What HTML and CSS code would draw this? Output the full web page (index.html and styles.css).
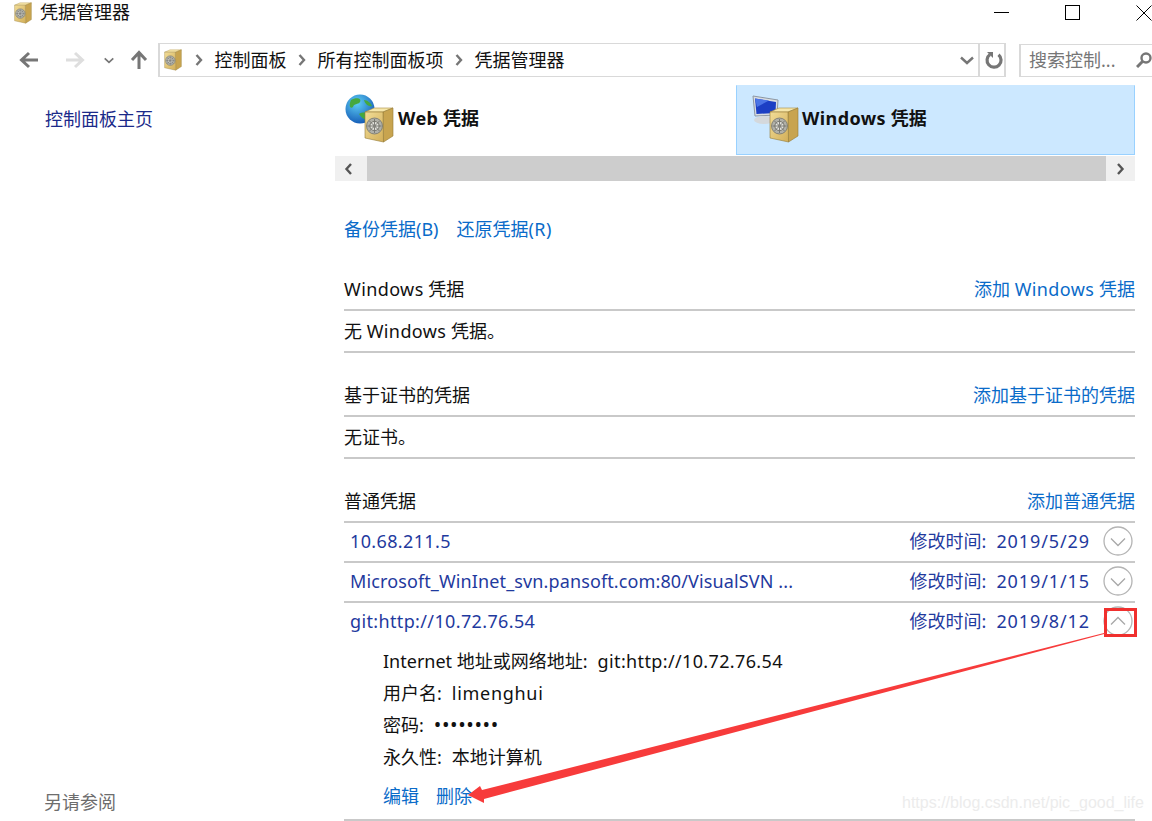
FILE: index.html
```html
<!DOCTYPE html>
<html lang="zh-CN">
<head>
    <meta charset="UTF-8">
    <title>凭据管理器</title>
    <link rel="stylesheet" href="styles.css">
</head>
<body>
    <svg class="defs" width="0" height="0">
        <defs>
            <linearGradient id="safeFront" x1="0" y1="0" x2="1" y2="1">
                <stop offset="0" stop-color="#f2dd97"/>
                <stop offset="1" stop-color="#d2ae58"/>
            </linearGradient>
            <radialGradient id="globeFill" cx="0.4" cy="0.3" r="0.8">
                <stop offset="0" stop-color="#5fd0f5"/>
                <stop offset="1" stop-color="#0d4fb0"/>
            </radialGradient>
            <symbol id="safe" viewBox="0 0 30 36">
                <path d="M1 5 L10 1 L29 1 L19 5 Z" fill="#f6e7ab" stroke="#a98a3c" stroke-width="0.6"/>
                <path d="M19 5 L29 1 L29 29 L19.5 35 Z" fill="#c8a44f" stroke="#947a36" stroke-width="0.6"/>
                <path d="M1 5 L19 5 L19.5 35 L1 31 Z" fill="url(#safeFront)" stroke="#947a36" stroke-width="0.6"/>
                <circle cx="10.5" cy="19" r="8" fill="#b0b0a8" stroke="#74746c" stroke-width="0.8"/>
                <circle cx="10.5" cy="19" r="4.6" fill="#e2e2dc" stroke="#77776f"/>
                <path d="M10.5 12 V26 M3.5 19 H17.5 M5.5 14 L15.5 24 M15.5 14 L5.5 24" stroke="#74746e" stroke-width="0.9"/>
                <circle cx="10.5" cy="19" r="1.7" fill="#85857f"/>
            </symbol>
            <symbol id="chevronRight" viewBox="0 0 8 12">
                <path d="M1.5 1 L6 6 L1.5 11" fill="none" stroke="currentColor" stroke-width="2.4"/>
            </symbol>
            <symbol id="chevronDown" viewBox="0 0 14 9">
                <path d="M1 1.5 L7 7 L13 1.5" fill="none" stroke="currentColor" stroke-width="2.4"/>
            </symbol>
            <symbol id="circleDown" viewBox="0 0 30 30">
                <circle cx="15" cy="15" r="14" fill="none" stroke="#b4b4b4" stroke-width="1.3"/>
                <path d="M8 12.5 L15 19.5 L22 12.5" fill="none" stroke="#a8a8a8" stroke-width="1.3"/>
            </symbol>
            <symbol id="circleUp" viewBox="0 0 30 30">
                <circle cx="15" cy="15" r="14" fill="none" stroke="#b4b4b4" stroke-width="1.3"/>
                <path d="M8 18.5 L15 11.5 L22 18.5" fill="none" stroke="#a8a8a8" stroke-width="1.3"/>
            </symbol>
        </defs>
    </svg>

    <header class="titlebar">
        <svg class="title-icon"><use href="#safe"/></svg>
        <span class="title-text">凭据管理器</span>
        <div class="window-btns">
            <svg class="win-btn" viewBox="0 0 16 16"><path d="M0 7.5 H15" stroke="#000" fill="none"/></svg>
            <svg class="win-btn" viewBox="0 0 16 16"><rect x="0.5" y="0.5" width="14" height="14" stroke="#000" fill="none"/></svg>
            <svg class="win-btn" viewBox="0 0 16 16"><path d="M0.5 0.5 L15.5 15.5 M15.5 0.5 L0.5 15.5" stroke="#000" fill="none"/></svg>
        </div>
    </header>

    <nav class="navbar">
        <div class="nav-arrows">
            <svg class="nav-arrow" viewBox="0 0 20 18"><path d="M19 9 H3 M10 2 L2.5 9 L10 16" fill="none" stroke="#767676" stroke-width="3"/></svg>
            <svg class="nav-arrow" viewBox="0 0 20 18"><path d="M1 9 H17 M10 2 L17.5 9 L10 16" fill="none" stroke="#dedede" stroke-width="3"/></svg>
            <svg class="nav-drop"><use href="#chevronDown"/></svg>
            <svg class="nav-up" viewBox="0 0 18 20"><path d="M9 19 V3 M2 10 L9 2.5 L16 10" fill="none" stroke="#767676" stroke-width="3"/></svg>
        </div>
        <div class="address">
            <svg class="address-icon"><use href="#safe"/></svg>
            <svg class="crumb-sep"><use href="#chevronRight"/></svg>
            <span>控制面板</span>
            <svg class="crumb-sep"><use href="#chevronRight"/></svg>
            <span>所有控制面板项</span>
            <svg class="crumb-sep"><use href="#chevronRight"/></svg>
            <span>凭据管理器</span>
            <svg class="address-drop"><use href="#chevronDown"/></svg>
            <div class="refresh">
                <svg viewBox="0 0 18 18" width="18" height="18"><path d="M13.5 3.8 A7 7 0 1 1 5 3.5" fill="none" stroke="#767676" stroke-width="3.2"/><path d="M3 0 H9 V6 Z" fill="#767676" transform="translate(-1 1)"/></svg>
            </div>
        </div>
        <div class="search">
            <span>搜索控制...</span>
            <svg class="search-icon" viewBox="0 0 16 16"><circle cx="10" cy="6" r="4.5" fill="none" stroke="#767676" stroke-width="2.4"/><path d="M6.5 9.5 L1 15" stroke="#767676" stroke-width="3"/></svg>
        </div>
    </nav>

    <div class="page">
        <aside class="sidebar">
            <a class="side-link">控制面板主页</a>
            <span class="side-note">另请参阅</span>
        </aside>

        <main class="content">
            <div class="tabs">
                <div class="tab">
                    <svg class="tab-globe" viewBox="0 0 30 30">
                        <circle cx="15" cy="15" r="14.5" fill="url(#globeFill)"/>
                        <path d="M6 6 C11 3 17 4 15 8 C13 11 9 9 8 13 C6 15 3 13 6 6 Z M14 20 C18 17 25 19 27 21 C24 27 18 27 14 20 Z M19 6 C22 6 26 9 27 12 C24 13 20 10 19 6 Z" fill="#46a83e"/>
                    </svg>
                    <svg class="tab-safe"><use href="#safe"/></svg>
                    <span class="tab-label"><span class="latin">Web</span> 凭据</span>
                </div>
                <div class="tab active">
                    <svg class="tab-screen" viewBox="0 0 30 30">
                        <path d="M2 1 L27 5 L26 20 L4 21 Z" fill="#d9dde2" stroke="#8d97a3"/>
                        <path d="M4 3.5 L25 7 L24.5 18 L5.5 19 Z" fill="#1c3fc4"/>
                        <path d="M4 3.5 L18 5.5 L6 12 Z" fill="#4a74e6"/>
                        <ellipse cx="13" cy="25" rx="10" ry="4" fill="#d4d8dc"/>
                    </svg>
                    <svg class="tab-safe"><use href="#safe"/></svg>
                    <span class="tab-label"><span class="latin">Windows</span> 凭据</span>
                </div>
            </div>
            <div class="scrollbar">
                <div class="scroll-btn"><svg class="scroll-left"><use href="#chevronRight"/></svg></div>
                <div class="scroll-thumb"></div>
                <div class="scroll-btn narrow"><svg class="scroll-right"><use href="#chevronRight"/></svg></div>
            </div>

            <div class="inner">
                <div class="backup-links">
                    <a class="action">备份凭据(B)</a>
                    <a class="action">还原凭据<span class="latin">(R)</span></a>
                </div>

                <section class="cred-section first">
                    <div class="section-head"><span><span class="latin">Windows</span> 凭据</span><a class="action">添加 <span class="latin">Windows</span> 凭据</a></div>
                    <div class="empty-row"><span>无 <span class="latin">Windows</span> 凭据。</span></div>
                </section>

                <section class="cred-section">
                    <div class="section-head"><span>基于证书的凭据</span><a class="action">添加基于证书的凭据</a></div>
                    <div class="empty-row">无证书。</div>
                </section>

                <section class="cred-section">
                    <div class="section-head"><span>普通凭据</span><a class="action">添加普通凭据</a></div>
                    <div class="cred-row ruled">
                        <a class="cred-name numeric">10.68.211.5</a>
                        <span class="cred-date"><span>修改时间:</span><span class="date-value">2019/5/29</span></span>
                        <svg class="cred-toggle"><use href="#circleDown"/></svg>
                    </div>
                    <div class="cred-row ruled">
                        <a class="cred-name">Microsoft_WinInet_svn.pansoft.com:80/VisualSVN ...</a>
                        <span class="cred-date"><span>修改时间:</span><span class="date-value">2019/1/15</span></span>
                        <svg class="cred-toggle"><use href="#circleDown"/></svg>
                    </div>
                    <div class="cred-row open">
                        <a class="cred-name numeric">git:http://10.72.76.54</a>
                        <span class="cred-date"><span>修改时间:</span><span class="date-value">2019/8/12</span></span>
                        <svg class="cred-toggle"><use href="#circleUp"/></svg>
                    </div>
                    <div class="cred-detail">
                        <div class="detail-line"><span>Internet 地址或网络地址:</span><span class="numeric">git:http://10.72.76.54</span></div>
                        <div class="detail-line"><span>用户名:</span><span class="wide">limenghui</span></div>
                        <div class="detail-line"><span>密码:</span><span class="dots">••••••••</span></div>
                        <div class="detail-line"><span>永久性:</span><span>本地计算机</span></div>
                        <div class="detail-actions"><a class="action">编辑</a><a class="action">删除</a></div>
                    </div>
                </section>
            </div>
        </main>
    </div>

    <!-- annotation drawn on top of the screenshot -->
    <div class="red-box"></div>
    <svg class="red-arrow" viewBox="0 0 1152 821" width="1152" height="821">
        <path d="M1106 632.5 L482 790 L480 786 L468 795 L484 803 L484 799 L1106 633.5 Z" fill="#f73b3b"/>
    </svg>
    <span class="watermark">https://blog.csdn.net/pic_good_life</span>
</body>
</html>
```

FILE: styles.css
```css
* {
    margin: 0;
    padding: 0;
    box-sizing: border-box;
}

html, body {
    height: 821px;
    overflow: hidden;
}

body {
    font-family: 'Noto Sans', 'Noto Sans CJK SC', sans-serif;
    font-size: 18px;
    line-height: 24px;
    color: #111;
    background: #fff;
    position: relative;
}

.defs {
    display: block;
    height: 0;
}

.latin {
    letter-spacing: 0.4px;
}

.numeric {
    letter-spacing: 0.36px;
}

.wide {
    letter-spacing: 0.7px;
}

/* title bar */
.titlebar {
    height: 43px;
    display: flex;
    align-items: flex-start;
    padding-left: 14px;
}

.title-icon {
    width: 18px;
    height: 22px;
    margin-top: 2px;
}

.title-text {
    margin-left: 8px;
    line-height: 24px;
}

.window-btns {
    margin-left: auto;
    display: flex;
    gap: 55px;
    padding-top: 5px;
}

.win-btn {
    width: 16px;
    height: 16px;
}

/* nav bar */
.navbar {
    height: 34px;
    display: flex;
    align-items: center;
}

.nav-arrows {
    width: 158px;
    display: flex;
    align-items: center;
    padding-left: 19px;
}

.nav-arrow {
    width: 20px;
    height: 18px;
    margin-right: 26px;
}

.nav-arrow + .nav-arrow {
    margin-right: 19px;
}

.nav-drop {
    width: 10px;
    height: 7px;
    color: #767676;
    margin-right: 20px;
}

.nav-up {
    width: 18px;
    height: 20px;
    margin-left: -4px;
}

.address {
    width: 848px;
    height: 34px;
    border: 2px solid #d9d9d9;
    border-width: 1px 2px;
    display: flex;
    align-items: center;
    padding-left: 4px;
}

.address-icon {
    width: 18px;
    height: 22px;
}

.crumb-sep {
    width: 8px;
    height: 12px;
    color: #767676;
    margin: 0 11.5px;
}

.address-icon + .crumb-sep {
    margin-left: 13px;
}

.address-drop {
    width: 14px;
    height: 9px;
    color: #767676;
    margin-left: auto;
    margin-right: 4px;
}

.refresh {
    width: 26px;
    height: 32px;
    border-left: 2px solid #d9d9d9;
    display: flex;
    align-items: center;
    justify-content: center;
    padding-left: 3px;
}

.search {
    margin-left: 13px;
    flex: 1;
    height: 33px;
    border: 2px solid #d9d9d9;
    border-width: 1px 0 1px 2px;
    display: flex;
    align-items: center;
    padding-left: 8px;
    color: #767676;
    white-space: nowrap;
}

.search-icon {
    width: 16px;
    height: 16px;
    margin-left: auto;
    flex-shrink: 0;
}

/* page body */
.page {
    display: flex;
    margin-top: 8px;
    height: 736px;
}

.sidebar {
    width: 335px;
    display: flex;
    flex-direction: column;
    justify-content: space-between;
    padding: 22px 0 7px 45px;
}

.side-link {
    color: #1b2a8a;
}

.side-note {
    color: #6d6d6d;
    margin-left: -1px;
}

.content {
    width: 800px;
}

.tabs {
    display: flex;
    height: 70px;
}

.tab {
    width: 401px;
    position: relative;
    font-weight: 700;
}

.tab.active {
    width: 399px;
    background: #cce8ff;
    border: 1px solid #99d1ff;
    border-top-color: #cce8ff;
}

.tab-label {
    position: absolute;
    left: 63px;
    top: 21px;
    white-space: nowrap;
}

.tab.active .tab-label {
    left: 65px;
    top: 20px;
}

.tab-globe {
    position: absolute;
    left: 10px;
    top: 9px;
    width: 30px;
    height: 30px;
}

.tab-screen {
    position: absolute;
    left: 14px;
    top: 9px;
    width: 30px;
    height: 30px;
}

.tab-safe {
    position: absolute;
    left: 29px;
    top: 22px;
    width: 30px;
    height: 36px;
}

.tab.active .tab-safe {
    left: 32px;
    top: 21px;
}

.scrollbar {
    margin-top: 1px;
    height: 25px;
    display: flex;
    background: #f0f0f0;
}

.scroll-btn {
    width: 32px;
    display: flex;
    align-items: center;
    justify-content: center;
    color: #555;
}

.scroll-btn.narrow {
    width: 29px;
}

.scroll-thumb {
    flex: 1;
    background: #cdcdcd;
}

.scroll-left {
    width: 9px;
    height: 12px;
    transform: scaleX(-1);
    margin-right: 6px;
}

.scroll-right {
    width: 9px;
    height: 12px;
}

.inner {
    padding-left: 9px;
}

.backup-links {
    margin-top: 36px;
    display: flex;
    gap: 18px;
}

.action {
    color: #0a6bc9;
    white-space: nowrap;
}

.cred-section {
    margin-top: 22px;
}

.cred-section.first {
    margin-top: 28px;
}

.section-head {
    height: 42px;
    display: flex;
    justify-content: space-between;
    align-items: center;
    border-bottom: 2px solid #c9c9c9;
}

.empty-row {
    height: 42px;
    display: flex;
    align-items: center;
    border-bottom: 2px solid #c9c9c9;
}

.cred-row {
    height: 40px;
    display: flex;
    align-items: center;
    padding: 0 0 2px 6px;
}

.cred-row.ruled {
    border-bottom: 2px solid #c9c9c9;
}

.cred-row.open {
    height: 38px;
}

.cred-name {
    color: #1f3a9e;
    white-space: nowrap;
    letter-spacing: 0.12px;
}

.cred-name.numeric {
    letter-spacing: 0.36px;
}

.cred-date {
    margin-left: auto;
    color: #1f3a9e;
    display: flex;
    gap: 10px;
}

.date-value {
    letter-spacing: 0.9px;
}

.cred-toggle {
    width: 30px;
    height: 30px;
    margin: 0 2px 0 13px;
    flex-shrink: 0;
}

.cred-detail {
    padding: 4px 0 0 39px;
    height: 180px;
    border-bottom: 2px solid #c9c9c9;
}

.detail-line {
    height: 32px;
    display: flex;
    align-items: center;
    gap: 10px;
}

.dots {
    font-size: 20px;
    letter-spacing: 0.6px;
}

.detail-actions {
    margin-top: 11px;
    display: flex;
    gap: 17px;
}

/* annotation layer */
.red-box {
    position: absolute;
    left: 1104px;
    top: 608px;
    width: 33px;
    height: 29px;
    border: 3px solid #f0302e;
}

.red-arrow {
    position: absolute;
    left: 0;
    top: 0;
}

.watermark {
    position: absolute;
    left: 902px;
    top: 791px;
    font-family: 'Liberation Sans', sans-serif;
    font-size: 16px;
    color: #ececec;
    white-space: nowrap;
}
```
